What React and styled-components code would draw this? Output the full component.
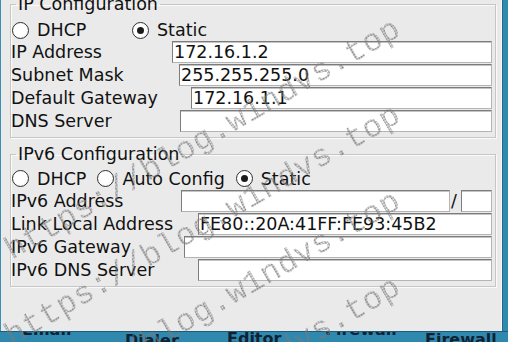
import React from 'react';
import styled, { createGlobalStyle } from 'styled-components';

const GlobalStyle = createGlobalStyle`
  html, body {
    margin: 0;
    padding: 0;
    background: #eaeaea;
  }
  body {
    font-family: "DejaVu Sans", Verdana, sans-serif;
  }
`;

const Screen = styled.div`
  position: relative;
  width: 508px;
  height: 342px;
  overflow: hidden;
  display: flex;
  flex-direction: column;
  background: #eaeaea;
`;

const Main = styled.div`
  flex: 1;
  min-height: 0;
  display: flex;
`;

const LeftEdge = styled.div`
  width: 1px;
  background: #3b8fb3;
`;

const RightEdge = styled.div`
  width: 6px;
  background: #2f8ab0;
  border-left: 1px solid #1f6a8e;
  box-sizing: border-box;
`;

const Panel = styled.div`
  flex: 1;
  min-width: 0;
  padding: 0 5px 0 9px;
  border-right: 1px solid #f6f6f6;
  color: #111;
  font-size: 17.5px;
`;

const Group = styled.fieldset`
  margin: ${p => p.$top}px 0 0;
  padding: 0 3px 5px 0;
  border: 1px solid #c6c6c6;
  box-shadow: 1px 1px 0 #fafafa, inset 1px 1px 0 #fafafa;
  min-width: 0;
  display: flex;
  flex-direction: column;
  gap: 1px;
`;

const Legend = styled.legend`
  margin-left: 5px;
  padding: 0 2px;
  line-height: 20px;
  font-size: 17.5px;
`;

const RadioRow = styled.div`
  height: ${p => p.$height}px;
  box-sizing: border-box;
  padding-top: ${p => p.$pad}px;
  display: flex;
  align-items: center;
`;

const Option = styled.label`
  display: flex;
  align-items: center;
  gap: 8px;
  line-height: 20px;
  width: ${p => (p.$width ? `${p.$width}px` : 'auto')};
  margin-right: ${p => (p.$width ? 0 : 10)}px;
`;

const Circle = styled.span`
  width: 17px;
  height: 17px;
  margin-left: 1px;
  box-sizing: border-box;
  border-radius: 50%;
  border: 1px solid #2e2e2e;
  background: radial-gradient(circle at 40% 35%, #ffffff 55%, #e6e6e6 100%);
  display: flex;
  align-items: center;
  justify-content: center;
  flex: none;

  &::after {
    content: '';
    display: ${p => (p.$checked ? 'block' : 'none')};
    width: 7px;
    height: 7px;
    border-radius: 50%;
    background: #1b1b1b;
  }
`;

const Row = styled.div`
  display: flex;
  height: 22px;
`;

const Label = styled.span`
  width: ${p => p.$width}px;
  flex: none;
  line-height: 22px;
  white-space: nowrap;
`;

const Field = styled.div`
  flex: ${p => (p.$width ? 'none' : 1)};
  width: ${p => (p.$width ? `${p.$width}px` : 'auto')};
  min-width: 0;
  box-sizing: border-box;
  height: 22px;
  padding-left: 1px;
  background: #fff;
  border: 1px solid #b4b4b4;
  border-top-color: #7c7c7c;
  border-left-color: #7c7c7c;
  box-shadow: inset 0 1px 0 #c4c4c4;
  line-height: 20px;
  white-space: nowrap;
  overflow: hidden;
`;

const Slash = styled.span`
  flex: none;
  padding: 0 4px 0 1px;
  line-height: 22px;
`;

const BottomBar = styled.div`
  height: 11px;
  flex: none;
  display: flex;
  align-items: flex-start;
  padding-left: 22px;
  overflow: hidden;
  background: #2f88ae;
  border-top: 1px solid #1c5b7a;
  box-sizing: border-box;
`;

const BarLabel = styled.span`
  flex: none;
  width: ${p => (p.$width ? `${p.$width}px` : 'auto')};
  margin-top: ${p => p.$dy}px;
  font: bold 16px/16px "DejaVu Sans", Verdana, sans-serif;
  color: #0f2233;
  white-space: nowrap;
`;

const Watermark = styled.div`
  position: absolute;
  inset: 0;
  overflow: hidden;
  pointer-events: none;
`;

const MarkLine = styled.div`
  position: absolute;
  left: 12px;
  top: ${p => p.$y - 25}px;
  transform-origin: 0 25px;
  transform: rotate(-30deg);
  font: 32px/33px "Liberation Mono", "DejaVu Sans Mono", monospace;
  letter-spacing: 0.4px;
  white-space: nowrap;
  color: transparent;
  background: repeating-conic-gradient(#7a7a7a 0 25%, transparent 0 50%) 0 0 / 2px 2px;
  -webkit-background-clip: text;
  background-clip: text;
`;

const ipv4 = [
  { label: 'IP Address', width: 161, value: '172.16.1.2' },
  { label: 'Subnet Mask', width: 168, value: '255.255.255.0' },
  { label: 'Default Gateway', width: 180, value: '172.16.1.1' },
  { label: 'DNS Server', width: 169, value: '' },
];

const ipv6 = [
  { label: 'Link Local Address', width: 187, value: 'FE80::20A:41FF:FE93:45B2' },
  { label: 'IPv6 Gateway', width: 173, value: '' },
  { label: 'IPv6 DNS Server', width: 187, value: '' },
];

const Radio = ({ checked, width, children }) => (
  <Option $width={width}>
    <Circle $checked={checked} />
    {children}
  </Option>
);

export default function App() {
  return (
    <>
      <GlobalStyle />
      <Screen>
        <Main>
          <LeftEdge />
          <Panel>
            <Group $top={-6}>
              <Legend>IP Configuration</Legend>
              <RadioRow $height={26} $pad={6}>
                <Radio width={120}>DHCP</Radio>
                <Radio checked>Static</Radio>
              </RadioRow>
              {ipv4.map(r => (
                <Row key={r.label}>
                  <Label $width={r.width}>{r.label}</Label>
                  <Field>{r.value}</Field>
                </Row>
              ))}
            </Group>

            <Group $top={6}>
              <Legend>IPv6 Configuration</Legend>
              <RadioRow $height={25} $pad={4}>
                <Radio>DHCP</Radio>
                <Radio>Auto Config</Radio>
                <Radio checked>Static</Radio>
              </RadioRow>
              <Row>
                <Label $width={170}>IPv6 Address</Label>
                <Field />
                <Slash>/</Slash>
                <Field $width={31} />
              </Row>
              {ipv6.map(r => (
                <Row key={r.label}>
                  <Label $width={r.width}>{r.label}</Label>
                  <Field>{r.value}</Field>
                </Row>
              ))}
            </Group>
          </Panel>
          <RightEdge />
        </Main>

        <BottomBar>
          <BarLabel $width={103} $dy={-10}>Email</BarLabel>
          <BarLabel $width={102} $dy={1}>Dialer</BarLabel>
          <BarLabel $width={98} $dy={-1}>Editor</BarLabel>
          <BarLabel $width={100} $dy={-10}>Firewall</BarLabel>
          <BarLabel $dy={0}>Firewall</BarLabel>
        </BottomBar>

        <Watermark>
          {[260, 346, 432, 518].map(y => (
            <MarkLine key={y} $y={y}>https://blog.w1ndvs.top</MarkLine>
          ))}
        </Watermark>
      </Screen>
    </>
  );
}
